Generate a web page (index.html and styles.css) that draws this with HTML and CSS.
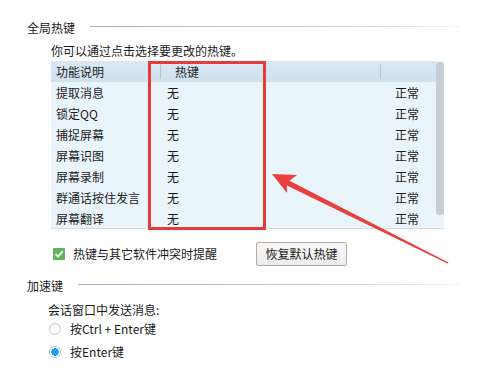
FILE: index.html
```html
<!DOCTYPE html>
<html lang="zh-CN">
<head>
  <meta charset="UTF-8">
  <title>全局热键</title>
  <link rel="stylesheet" href="styles.css">
</head>
<body>
  <div class="panel">
    <!-- 全局热键 -->
    <div class="group-title">
      <span>全局热键</span>
      <div class="rule"></div>
    </div>
    <p class="hint">你可以通过点击选择要更改的热键。</p>

    <div class="hotkey-list">
      <div class="list-body">
        <div class="row head">
          <span class="c1">功能说明</span>
          <span class="c2">热键</span>
          <span class="c3"></span>
        </div>
        <div class="row"><span class="c1">提取消息</span><span class="c2">无</span><span class="c3">正常</span></div>
        <div class="row"><span class="c1">锁定QQ</span><span class="c2">无</span><span class="c3">正常</span></div>
        <div class="row"><span class="c1">捕捉屏幕</span><span class="c2">无</span><span class="c3">正常</span></div>
        <div class="row"><span class="c1">屏幕识图</span><span class="c2">无</span><span class="c3">正常</span></div>
        <div class="row"><span class="c1">屏幕录制</span><span class="c2">无</span><span class="c3">正常</span></div>
        <div class="row"><span class="c1">群通话按住发言</span><span class="c2">无</span><span class="c3">正常</span></div>
        <div class="row"><span class="c1">屏幕翻译</span><span class="c2">无</span><span class="c3">正常</span></div>
      </div>
      <div class="scrollbar"><div class="thumb"></div></div>
      <div class="highlight"></div>
    </div>

    <div class="options">
      <label class="check">
        <span class="box">
          <svg width="12" height="12" viewBox="0 0 12 12"><path d="M2.5 6.2 L5 8.6 L9.6 3.4" fill="none" stroke="#fff" stroke-width="1.8"/></svg>
        </span>
        热键与其它软件冲突时提醒
      </label>
      <button class="btn">恢复默认热键</button>
    </div>

    <!-- 加速键 -->
    <div class="group-title second">
      <span>加速键</span>
      <div class="rule"></div>
    </div>
    <p class="hint small">会话窗口中发送消息:</p>
    <div class="radio"><span class="dot"></span>按Ctrl + Enter键</div>
    <div class="radio"><span class="dot on"></span>按Enter键</div>
  </div>

  <!-- annotation arrow -->
  <svg class="arrow" width="480" height="380" viewBox="0 0 480 380">
    <polygon points="272,174 297,175 289.5,180.8 448.5,262.4 447.6,263.6 286.8,185.4 287,193" fill="#e8403c"/>
  </svg>
</body>
</html>
```

FILE: styles.css
```css
/* Base */
body {
  margin: 0;
  background: #ffffff;
  color: #1b1b1b;
  font-family: "Noto Sans CJK SC", "Noto Sans", sans-serif;
  font-size: 12px;
  line-height: 16px;
}

.panel {
  padding: 20px 20px 0 27px;
}

/* Group titles */
.group-title {
  display: flex;
  align-items: center;
  gap: 15px;
}

.group-title .rule {
  flex: 1;
  height: 1px;
  margin-top: -3px;
  background: linear-gradient(to right, #9fb3c5, #c8d4de 70%, #f4f6f8);
}

.group-title.second {
  margin-top: 12px;
}

.hint {
  margin: 7px 0 0 24px;
}

.hint.small {
  margin: 8px 0 0 21px;
}

/* Hotkey list */
.hotkey-list {
  position: relative;
  display: flex;
  width: 393px;
  height: 168px;
  margin: 2px 0 0 24px;
  background: #eaf4fb;
  border-bottom: 1px solid #d3dfe8;
  box-sizing: border-box;
}

.list-body {
  flex: 1;
}

.row {
  display: grid;
  grid-template-columns: 109px 220px 1fr;
  height: 21px;
  line-height: 21px;
}

.row span {
  white-space: nowrap;
}

.c1 {
  padding-left: 5px;
}

.c2 {
  padding-left: 7px;
}

.c3 {
  padding-left: 15px;
}

.row.head {
  background: linear-gradient(#dbe8f4, #cfe0ee);
}

.row.head .c2,
.row.head .c3 {
  border-left: 1px solid #b4c6d6;
  margin: 3px 0;
  line-height: 15px;
}

.row.head .c2 {
  padding-left: 14px;
}

.scrollbar {
  width: 8px;
  padding: 1px 0 13px;
  box-sizing: border-box;
  background: #eef5fa;
}

.thumb {
  height: 100%;
  background: #c6cdd4;
  border-radius: 3px;
}

.highlight {
  position: absolute;
  left: 97px;
  top: 0;
  width: 118px;
  height: 169px;
  border: 3px solid #e53b3b;
  box-sizing: border-box;
}

/* Options row */
.options {
  display: flex;
  align-items: center;
  margin: 13px 0 0 26px;
}

.check {
  display: flex;
  align-items: center;
  gap: 8px;
}

.box {
  display: flex;
  width: 12px;
  height: 12px;
  background: #5fb65a;
  border-radius: 1px;
}

.btn {
  margin-left: 39px;
  width: 91px;
  height: 24px;
  padding: 0;
  font: inherit;
  color: #1b1b1b;
  background: linear-gradient(#f7f7f7, #ececec);
  border: 1px solid #adadad;
  border-radius: 2px;
}

/* Radios */
.radio {
  display: flex;
  align-items: center;
  gap: 9px;
  margin: 3px 0 0 22px;
}

.radio + .radio {
  margin-top: 7px;
}

.dot {
  width: 10px;
  height: 10px;
  border: 1px solid #c4c4c4;
  border-radius: 50%;
  background: #fff;
}

.dot.on {
  border-color: #a9cde8;
  background: radial-gradient(circle, #1f9de6 0 3.5px, #fff 4px);
}

/* Annotation */
.arrow {
  position: absolute;
  left: 0;
  top: 0;
  pointer-events: none;
}
```
